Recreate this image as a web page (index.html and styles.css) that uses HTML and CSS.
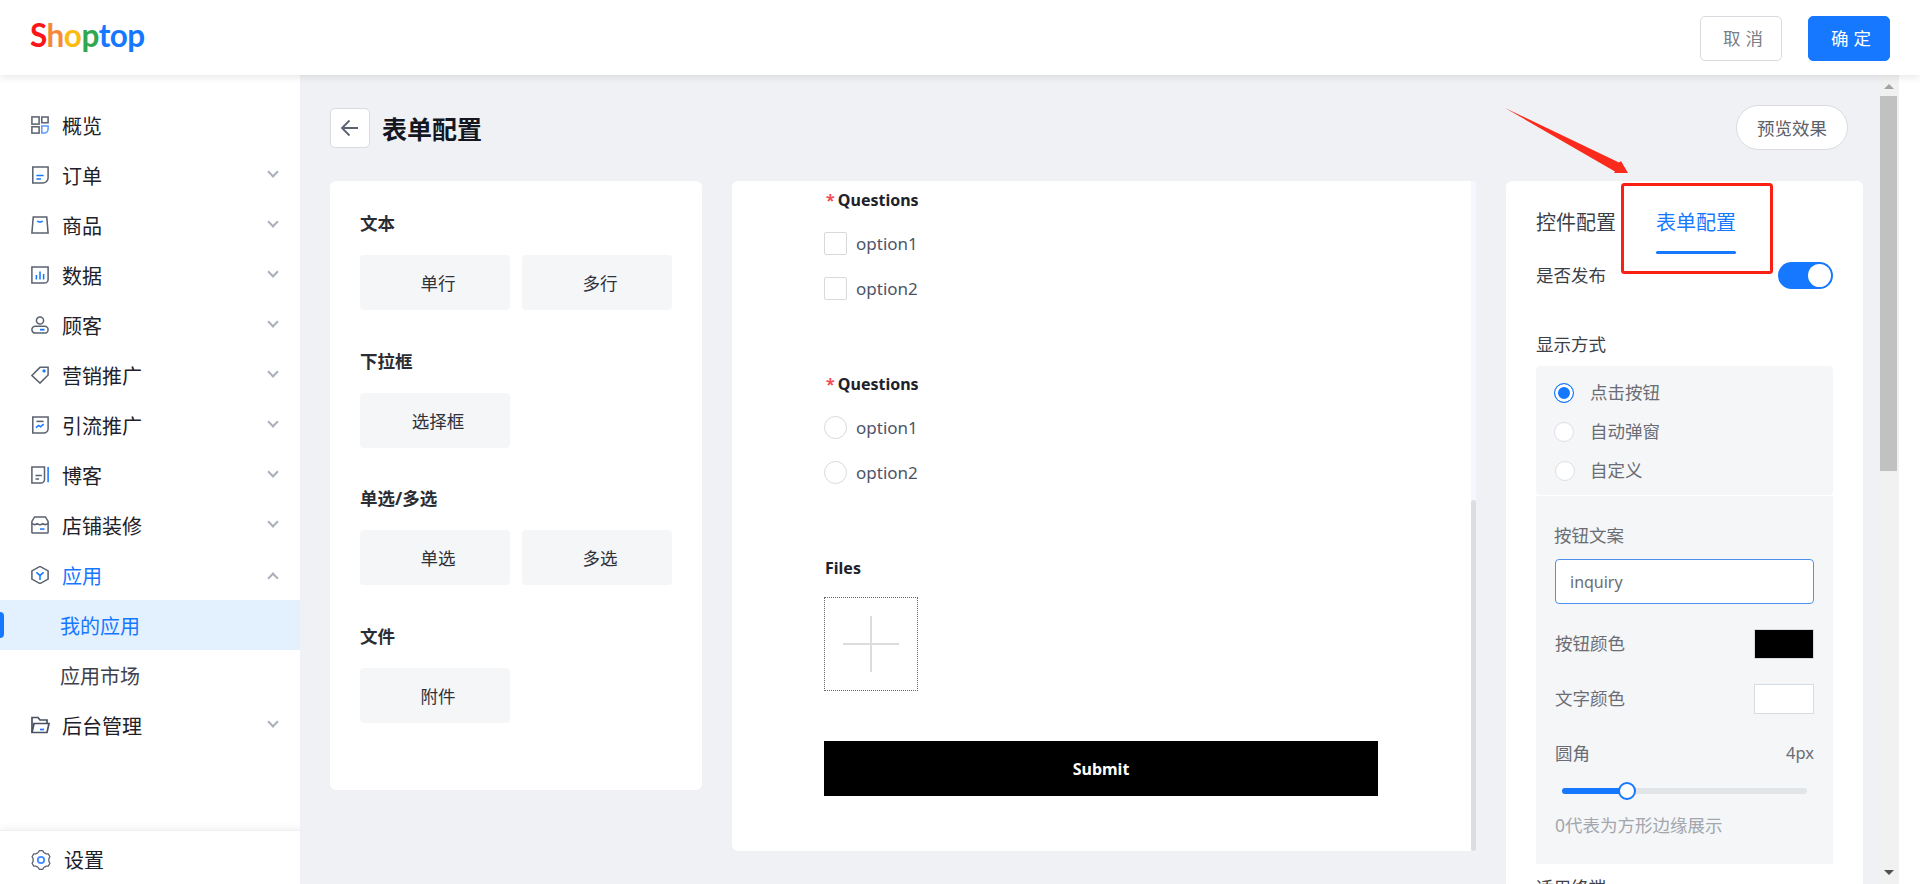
FILE: index.html
```html
<!DOCTYPE html>
<html lang="zh-CN">
<head>
    <meta charset="UTF-8">
    <meta name="viewport" content="width=device-width, initial-scale=1.0">
    <title>表单配置</title>
    <link rel="stylesheet" href="styles.css">
</head>
<body>

    <header class="topbar">
        <div class="logo"><span class="c-red">S</span><span class="c-orange">h</span><span class="c-yellow">o</span><span class="c-green">p</span><span class="c-blue">top</span></div>
        <div class="topbar-actions">
            <button type="button" class="btn-cancel">取消</button>
            <button type="button" class="btn-ok">确定</button>
        </div>
    </header>

    <div class="layout">
        <!-- Sidebar -->
        <aside class="sidebar">
            <nav class="menu">
                <div class="menu-item">
                    <svg class="menu-icon" viewBox="0 0 20 20" fill="none" stroke="#5b6270" stroke-width="1.700"><rect x="1" y="1" width="8" height="8"/><rect x="1" y="12" width="8" height="7"/><path d="M12 1h7v6.500h-7z"/><path d="M12 11h7v3.500a4.500 4.500 0 0 1-4.500 4.500h-2.500z" stroke="#5b9bff"/></svg>
                    <span>概览</span>
                </div>
                <div class="menu-item">
                    <svg class="menu-icon" viewBox="0 0 20 20" fill="none" stroke="#5b6270" stroke-width="1.700"><path d="M2 1h17v12a6 6 0 0 1-6 6h-11z"/><path d="M6 10.500h8M6 14.500h5" stroke="#1677ff"/></svg>
                    <span>订单</span><i class="chevron"></i>
                </div>
                <div class="menu-item">
                    <svg class="menu-icon" viewBox="0 0 20 20" fill="none" stroke="#5b6270" stroke-width="1.700"><path d="M2.500 1h15l1.500 18h-18z"/><path d="M7 5.500c1.500 1.500 4.500 1.500 6 0" stroke="#1677ff"/></svg>
                    <span>商品</span><i class="chevron"></i>
                </div>
                <div class="menu-item">
                    <svg class="menu-icon" viewBox="0 0 20 20" fill="none" stroke="#5b6270" stroke-width="1.700"><path d="M1 1h18v14a4 4 0 0 1-4 4h-14z"/><path d="M6 10v5M10 6v9M14 9v6" stroke="#1677ff"/></svg>
                    <span>数据</span><i class="chevron"></i>
                </div>
                <div class="menu-item">
                    <svg class="menu-icon" viewBox="0 0 20 20" fill="none" stroke="#5b6270" stroke-width="1.700"><circle cx="10" cy="5" r="4"/><rect x="1" y="11.500" width="18" height="7.500" rx="3.750"/><path d="M10 15.200h5" stroke="#1677ff" stroke-width="2"/></svg>
                    <span>顾客</span><i class="chevron"></i>
                </div>
                <div class="menu-item">
                    <svg class="menu-icon" viewBox="0 0 20 20" fill="none" stroke="#5b6270" stroke-width="1.700"><path d="M1 10.500l9-9h9v8.500l-9 9z"/><circle cx="14.500" cy="5.500" r="1" fill="#1677ff" stroke="#1677ff"/></svg>
                    <span>营销推广</span><i class="chevron"></i>
                </div>
                <div class="menu-item">
                    <svg class="menu-icon" viewBox="0 0 20 20" fill="none" stroke="#5b6270" stroke-width="1.700"><path d="M2 1h17v13a5 5 0 0 1-5 5h-12z"/><path d="M6 6h8"/><path d="M5.500 13l3-2.500 2 1.500 3.500-3" stroke="#1677ff"/></svg>
                    <span>引流推广</span><i class="chevron"></i>
                </div>
                <div class="menu-item">
                    <svg class="menu-icon" viewBox="0 0 20 20" fill="none" stroke="#5b6270" stroke-width="1.700"><path d="M15 1h-14v18h10a4 4 0 0 0 4-4z"/><path d="M5 10.500h7M5 14.500h4"/><path d="M19 1v17" stroke="#1677ff"/></svg>
                    <span>博客</span><i class="chevron"></i>
                </div>
                <div class="menu-item">
                    <svg class="menu-icon" viewBox="0 0 20 20" fill="none" stroke="#5b6270" stroke-width="1.700"><path d="M4 1h12l3 5v12a1 1 0 0 1-1 1h-16a1 1 0 0 1-1-1v-12z"/><path d="M1 8c2 2 4 2 6 .5 2 1.500 4 1.500 6 0 2 1.500 4 1.500 6-.5"/><path d="M10 14.500h5" stroke="#1677ff"/></svg>
                    <span>店铺装修</span><i class="chevron"></i>
                </div>
                <div class="menu-item active">
                    <svg class="menu-icon" viewBox="0 0 20 20" fill="none" stroke="#5b6270" stroke-width="1.700"><path d="M10 .5l9 5v9l-9 5-9-5v-9z"/><path d="M6 7l4 3.500 4-3.500M10 10.500v5" stroke="#1677ff"/></svg>
                    <span>应用</span><i class="chevron up"></i>
                </div>
                <div class="submenu-item current">我的应用</div>
                <div class="submenu-item">应用市场</div>
                <div class="menu-item">
                    <svg class="menu-icon wide" viewBox="0 0 20 18" fill="none" stroke="#4a5160" stroke-width="1.700"><path d="M2 16.500v-15h6l2 2.500h7v3"/><path d="M2 16.500l2-9h15l-2 9z"/><path d="M10 13.500h4" stroke="#1677ff"/></svg>
                    <span>后台管理</span><i class="chevron"></i>
                </div>
            </nav>
            <div class="sidebar-footer">
                <svg class="menu-icon" viewBox="0 0 20 20" fill="none" stroke="#5b6270" stroke-width="1.300" stroke-linejoin="round"><path d="M11.650 19.360L8.350 19.360 7.260 17.520 4.860 16.130 2.720 16.110 1.070 13.250 2.120 11.390 2.120 8.610 1.070 6.750 2.720 3.890 4.860 3.870 7.260 2.480 8.350 .64 11.650 .64 12.740 2.480 15.140 3.870 17.280 3.890 18.930 6.750 17.880 8.610 17.880 11.390 18.930 13.250 17.280 16.110 15.140 16.130 12.740 17.520z"/><circle cx="10" cy="10" r="3.200" stroke="#3f8cff" stroke-width="1.800"/></svg>
                <span>设置</span>
            </div>
        </aside>

        <!-- Main area -->
        <main class="main">
            <div class="page-head">
                <button type="button" class="back-btn">
                    <svg width="20" height="20" viewBox="0 0 20 20" fill="none" stroke="#5b6270" stroke-width="1.800"><path d="M18 10h-16M9.500 2.500l-7.500 7.500 7.500 7.500"/></svg>
                </button>
                <h1>表单配置</h1>
                <button type="button" class="preview-btn">预览效果</button>
            </div>

            <div class="panels">
                <section class="panel widgets">
                    <h3>文本</h3>
                    <div class="widget-row"><div class="widget">单行</div><div class="widget">多行</div></div>
                    <h3>下拉框</h3>
                    <div class="widget-row"><div class="widget">选择框</div></div>
                    <h3>单选/多选</h3>
                    <div class="widget-row"><div class="widget">单选</div><div class="widget">多选</div></div>
                    <h3>文件</h3>
                    <div class="widget-row"><div class="widget">附件</div></div>
                </section>

                <section class="panel canvas">
                    <div class="form-preview">
                        <div class="q-label"><span class="star">*</span> Questions</div>
                        <div class="option"><i class="box"></i>option1</div>
                        <div class="option"><i class="box"></i>option2</div>

                        <div class="q-label next"><span class="star">*</span> Questions</div>
                        <div class="option"><i class="box round"></i>option1</div>
                        <div class="option"><i class="box round"></i>option2</div>

                        <div class="q-label next plain">Files</div>
                        <div class="upload"><i class="plus-h"></i><i class="plus-v"></i></div>
                        <div class="submit">Submit</div>
                    </div>
                    <div class="canvas-track"><div class="canvas-thumb"></div></div>
                </section>

                <section class="panel config">
                    <div class="tabs">
                        <div class="tab">控件配置</div>
                        <div class="tab selected">表单配置</div>
                    </div>
                    <div class="publish-row">
                        <span>是否发布</span>
                        <div class="switch"><i></i></div>
                    </div>
                    <div class="config-title">显示方式</div>
                    <div class="radio-box">
                        <div class="radio on"><i></i><span>点击按钮</span></div>
                        <div class="radio"><i></i><span>自动弹窗</span></div>
                        <div class="radio shifted"><i></i><span>自定义</span></div>
                    </div>
                    <div class="sub-box">
                        <div class="sub-label">按钮文案</div>
                        <div class="text-input">inquiry</div>
                        <div class="color-row first"><span>按钮颜色</span><i class="swatch black"></i></div>
                        <div class="color-row"><span>文字颜色</span><i class="swatch"></i></div>
                        <div class="radius-row"><span>圆角</span><span class="radius-value">4px</span></div>
                        <div class="slider"><div class="slider-track"><div class="slider-fill"></div></div><i class="slider-thumb"></i></div>
                        <div class="hint">0代表为方形边缘展示</div>
                    </div>
                    <div class="config-title cut">适用终端</div>
                </section>
            </div>
        </main>

        <!-- Page scrollbar -->
        <div class="scrollbar">
            <i class="arrow-up"></i>
            <div class="scroll-thumb"></div>
            <i class="arrow-down"></i>
        </div>
    </div>

    <!-- Red marks drawn over the screenshot -->
    <svg class="marks" width="1920" height="884" viewBox="0 0 1920 884">
        <polygon points="1505,108 1619,162.500 1621,161 1628,173 1614,173 1615,171.500" fill="#fa2a1c"/>
        <rect x="1622.500" y="184.500" width="149" height="88" rx="2" fill="none" stroke="#fa2014" stroke-width="3"/>
    </svg>

</body>
</html>
```

FILE: styles.css
```css
/* General Styles */
* {
    box-sizing: border-box;
}

html, body {
    height: 100%;
}

body {
    margin: 0;
    height: 884px;
    overflow: hidden;
    position: relative;
    display: flex;
    flex-direction: column;
    background: #fff;
    color: #1d2129;
    font-family: "Noto Sans", "Noto Sans CJK SC", sans-serif;
    font-size: 17.5px;
}

button {
    font-family: inherit;
    cursor: pointer;
}

i {
    display: block;
    font-style: normal;
}

/* Top bar */
.topbar {
    height: 75px;
    flex-shrink: 0;
    display: flex;
    justify-content: space-between;
    align-items: center;
    padding: 2px 30px 0 30px;
    background: #fff;
    box-shadow: 0 2px 8px rgba(0, 0, 0, 0.1);
    position: relative;
    z-index: 2;
}

.logo {
    font-family: Lato, sans-serif;
    font-size: 31.5px;
    font-weight: 700;
    line-height: 40px;
    letter-spacing: -0.5px;
    margin-top: -7px;
}

.c-red { color: #fb1418; }
.c-orange { color: #f38a3a; }
.c-yellow { color: #fdbb12; }
.c-green { color: #2fa84f; }
.c-blue { color: #1677ff; }

.topbar-actions {
    display: flex;
    gap: 26px;
}

.topbar-actions button {
    width: 82px;
    height: 45px;
    border-radius: 5px;
    font-size: 17.5px;
    letter-spacing: 5px;
    padding: 0 0 2px 9px;
}

.btn-cancel {
    background: #fff;
    border: 1px solid #d9dbe0;
    color: #7a7e86;
}

.btn-ok {
    background: #1677ff;
    border: 1px solid #1677ff;
    color: #fff;
}

.layout {
    flex: 1;
    display: flex;
    min-height: 0;
}

/* Sidebar */
.sidebar {
    width: 300px;
    flex-shrink: 0;
    display: flex;
    flex-direction: column;
    background: #fff;
}

.menu {
    padding-top: 25px;
    flex: 1;
}

.menu-item,
.sidebar-footer {
    display: flex;
    align-items: center;
    font-size: 20px;
    padding-left: 31px;
}

.menu-item {
    height: 50px;
    position: relative;
}

.menu-icon {
    width: 18px;
    height: 18px;
    margin-right: 13px;
    flex-shrink: 0;
}

.menu-icon.wide {
    width: 20px;
    margin-left: -1px;
    margin-right: 12px;
}

.chevron {
    width: 8px;
    height: 8px;
    margin-left: auto;
    margin-right: 23px;
    margin-top: -6px;
    border-right: 2px solid #aab0bb;
    border-bottom: 2px solid #aab0bb;
    transform: rotate(45deg);
}

.chevron.up {
    margin-top: 6px;
    transform: rotate(225deg);
}

.menu-item.active span {
    color: #1677ff;
}

.submenu-item {
    height: 50px;
    display: flex;
    align-items: center;
    padding-left: 60px;
    font-size: 20px;
    color: #3d424d;
    position: relative;
}

.submenu-item.current {
    background: #e3f1ff;
    color: #1677ff;
}

.submenu-item.current::before {
    content: "";
    position: absolute;
    left: 0;
    top: 12px;
    width: 4px;
    height: 26px;
    border-radius: 0 4px 4px 0;
    background: #1677ff;
}

.sidebar-footer {
    height: 54px;
    flex-shrink: 0;
    padding-top: 4px;
    border-top: 1px solid #eef0f3;
    box-shadow: 0 -3px 8px rgba(0, 0, 0, 0.04), 4px 0 8px rgba(0, 0, 0, 0.03);
}

.sidebar-footer .menu-icon {
    width: 20px;
    height: 20px;
    margin-right: 13px;
}

/* Main area */
.main {
    flex: 1;
    min-width: 0;
    overflow: hidden;
    background: #f0f1f5;
    padding: 30px 17px 0 30px;
}

.page-head {
    display: flex;
    align-items: center;
    height: 45px;
    margin-bottom: 31px;
    padding-right: 15px;
}

.back-btn {
    width: 40px;
    height: 40px;
    margin-top: 1px;
    padding: 0;
    display: flex;
    align-items: center;
    justify-content: center;
    background: #fff;
    border: 1px solid #d9dbe0;
    border-radius: 5px;
}

.page-head h1 {
    margin: 0 0 0 12px;
    font-size: 25px;
    font-weight: 700;
    color: #14171f;
}

.preview-btn {
    margin-left: auto;
    width: 112px;
    height: 45px;
    padding: 0;
    background: #fff;
    border: 1px solid #d9dbe0;
    border-radius: 23px;
    font-size: 17.5px;
    color: #5c606a;
}

.panels {
    display: flex;
    align-items: flex-start;
    gap: 30px;
}

.panel {
    background: #fff;
    border-radius: 6px;
}

/* Widget list */
.widgets {
    width: 372px;
    height: 609px;
    flex-shrink: 0;
    padding: 30px;
}

.widgets h3 {
    margin: 0;
    height: 26px;
    line-height: 24px;
    font-size: 17.5px;
    font-weight: 700;
    color: #2a2d34;
}

.widget-row {
    display: flex;
    gap: 12px;
    margin: 18px 0 38.67px;
}

.widget {
    width: 150px;
    height: 55px;
    display: flex;
    align-items: center;
    justify-content: center;
    padding-left: 6px;
    background: #f5f6f8;
    border-radius: 4px;
    font-size: 17.5px;
    color: #2f323a;
}

/* Form canvas */
.canvas {
    width: 744px;
    height: 670px;
    flex-shrink: 0;
    position: relative;
    padding: 8px 0 0 92px;
    border-radius: 6px 0 0 6px;
}

.form-preview {
    width: 554px;
    font-size: 16px;
}

.q-label {
    height: 22px;
    line-height: 22px;
    font-weight: 700;
    color: #1d2129;
    margin-bottom: 21px;
    padding-left: 2px;
    word-spacing: -1px;
}

.q-label.next {
    margin-top: 73px;
}

.q-label.plain {
    padding-left: 1px;
}

.star {
    color: #f5475b;
}

.option {
    display: flex;
    align-items: center;
    height: 23px;
    margin-bottom: 22px;
    font-size: 17px;
    color: #4d5467;
}

.option:has(+ .q-label) {
    margin-bottom: 0;
}

.box {
    width: 23px;
    height: 23px;
    margin-right: 9px;
    background: #fff;
    border: 1px solid #d9d9d9;
    border-radius: 2px;
}

.box.round {
    border-radius: 50%;
}

.upload {
    width: 94px;
    height: 94px;
    margin-top: -3px;
    border: 1px dotted #666;
    position: relative;
}

.plus-h,
.plus-v {
    position: absolute;
    background: #dcdcdc;
}

.plus-h {
    left: 18px;
    top: 45px;
    width: 56px;
    height: 2px;
}

.plus-v {
    left: 45px;
    top: 18px;
    width: 2px;
    height: 56px;
}

.submit {
    height: 55px;
    margin-top: 50px;
    display: flex;
    align-items: center;
    justify-content: center;
    background: #000;
    color: #fff;
    font-weight: 700;
}

.canvas-track {
    position: absolute;
    right: 0;
    top: 0;
    bottom: 0;
    width: 5px;
    background: #f4f8fe;
}

.canvas-thumb {
    position: absolute;
    left: 0;
    right: 0;
    top: 319px;
    bottom: 0;
    border-radius: 3px;
    background: #dcdde1;
}

/* Config panel */
.config {
    width: 357px;
    flex-shrink: 0;
    height: 720px;
    padding: 28px 30px 0;
    color: #3b3f48;
}

.tabs {
    display: flex;
    gap: 40px;
}

.tab {
    height: 45px;
    line-height: 28px;
    font-size: 20px;
    color: #3b3f48;
}

.tab.selected {
    color: #1677ff;
    position: relative;
}

.tab.selected::after {
    content: "";
    position: absolute;
    left: 0;
    right: 0;
    bottom: 0;
    height: 3px;
    border-radius: 2px;
    background: #1677ff;
}

.publish-row {
    display: flex;
    justify-content: space-between;
    align-items: center;
    height: 27px;
    margin-top: 8px;
}

.publish-row span {
    margin-top: -2px;
}

.switch {
    width: 55px;
    height: 27px;
    border-radius: 14px;
    background: #1677ff;
    padding: 2px 2px 2px 30px;
}

.switch i {
    width: 23px;
    height: 23px;
    border-radius: 50%;
    background: #fff;
}

.config-title {
    height: 26px;
    line-height: 24px;
    margin-top: 43px;
}

.config-title.cut {
    margin-top: 11px;
}

.radio-box {
    height: 129px;
    margin-top: 8px;
    padding: 17px 0 0 18px;
    display: flex;
    flex-direction: column;
    gap: 19px;
    background: #f5f6f8;
    border-radius: 4px;
}

.radio {
    display: flex;
    align-items: center;
    height: 20px;
    color: #6a6d74;
}

.radio span {
    margin-top: -4px;
}

.radio i {
    width: 20px;
    height: 20px;
    margin-right: 16px;
    background: #fff;
    border: 1px solid #dcdfe4;
    border-radius: 50%;
}

.radio.on i {
    border-color: #1677ff;
    box-shadow: inset 0 0 0 3px #fff;
    background: #1677ff;
}

.radio.shifted i {
    margin-left: 1px;
    margin-right: 15px;
}

.sub-box {
    margin-top: 1px;
    padding: 26px 19px;
    background: #f5f6f8;
    color: #6a6d74;
}

.sub-label {
    height: 26px;
    line-height: 26px;
    margin-left: -1px;
}

.text-input {
    height: 45px;
    margin-top: 11px;
    padding-left: 14px;
    display: flex;
    align-items: center;
    background: #fff;
    border: 1px solid #4e92f0;
    border-radius: 4px;
    font-size: 16px;
    color: #6a6d74;
}

.color-row {
    display: flex;
    justify-content: space-between;
    align-items: center;
    height: 30px;
    margin-top: 25px;
}

.color-row span {
    margin-top: -3px;
}

.swatch {
    width: 60px;
    height: 30px;
    background: #fff;
    border: 1px solid #d5dde3;
}

.swatch.black {
    background: #000;
}

.radius-row {
    display: flex;
    justify-content: space-between;
    height: 26px;
    line-height: 24px;
    margin-top: 27px;
}

.radius-value {
    font-size: 16.5px;
}

.slider {
    height: 18px;
    margin-top: 15px;
    padding: 6px 7px 0;
    position: relative;
}

.slider-track {
    height: 6px;
    border-radius: 3px;
    background: #e2e5e8;
}

.slider-fill {
    width: 65px;
    height: 6px;
    border-radius: 3px;
    background: #1677ff;
}

.slider-thumb {
    position: absolute;
    left: 63px;
    top: 0;
    width: 18px;
    height: 18px;
    background: #fff;
    border: 2px solid #1677ff;
    border-radius: 50%;
}

.hint {
    height: 26px;
    line-height: 26px;
    margin-top: 12px;
    color: #a3a6ad;
}

/* Page scrollbar */
.scrollbar {
    width: 19px;
    flex-shrink: 0;
    margin-right: 21px;
    padding-right: 2px;
    display: flex;
    flex-direction: column;
    align-items: stretch;
    background: #f1f1f1;
}

.arrow-up,
.arrow-down {
    width: 0;
    align-self: center;
    border-left: 5px solid transparent;
    border-right: 5px solid transparent;
}

.arrow-up {
    margin-top: 9px;
    border-bottom: 5px solid #a3a3a3;
}

.scroll-thumb {
    height: 375px;
    margin-top: 7px;
    background: #c1c1c1;
}

.arrow-down {
    margin-top: auto;
    margin-bottom: 9px;
    border-top: 5px solid #505050;
}

/* Red marks */
.marks {
    position: absolute;
    left: 0;
    top: 0;
    z-index: 5;
    pointer-events: none;
}
```
